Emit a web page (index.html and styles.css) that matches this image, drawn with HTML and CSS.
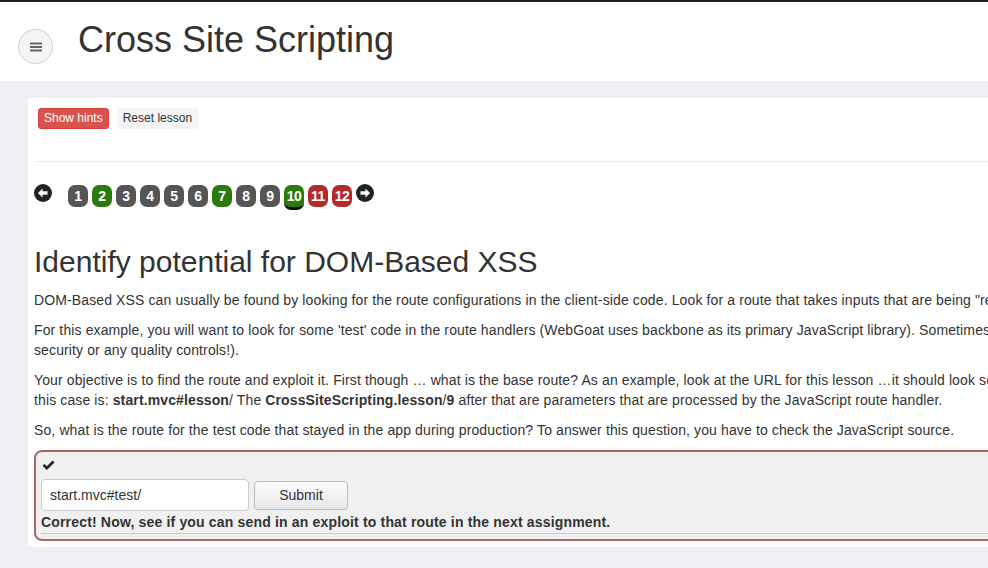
FILE: index.html
```html
<!DOCTYPE html>
<html lang="en">
<head>
<meta charset="utf-8">
<title>Cross Site Scripting</title>
<link rel="stylesheet" href="styles.css">
</head>
<body>
<header class="header">
  <button class="menu-btn" aria-label="menu">
    <svg width="12" height="10" viewBox="0 0 12 10"><rect x="0" y="0.5" width="12" height="2" fill="#666"/><rect x="0" y="4" width="12" height="2" fill="#666"/><rect x="0" y="7.5" width="12" height="2" fill="#666"/></svg>
  </button>
  <h1 class="title">Cross Site Scripting</h1>
</header>
<main class="panel">
  <div class="controls">
    <button class="btn btn-danger">Show hints</button>
    <button class="btn btn-default">Reset lesson</button>
  </div>
  <nav class="pager">
    <span class="arrow"><svg width="18" height="18" viewBox="0 0 18 18"><circle cx="9" cy="9" r="9" fill="#222"/><path d="M4 9 L8.5 4.5 L8.5 7.2 L13.5 7.2 L13.5 10.8 L8.5 10.8 L8.5 13.5 Z" fill="#fff"/></svg></span>
    <div class="pages">
      <span class="page gray">1</span>
      <span class="page green">2</span>
      <span class="page gray">3</span>
      <span class="page gray">4</span>
      <span class="page gray">5</span>
      <span class="page gray">6</span>
      <span class="page green">7</span>
      <span class="page gray">8</span>
      <span class="page gray">9</span>
      <span class="page green current">10</span>
      <span class="page red">11</span>
      <span class="page red">12</span>
    </div>
    <span class="arrow"><svg width="18" height="18" viewBox="0 0 18 18"><circle cx="9" cy="9" r="9" fill="#222"/><path d="M14 9 L9.5 4.5 L9.5 7.2 L4.5 7.2 L4.5 10.8 L9.5 10.8 L9.5 13.5 Z" fill="#fff"/></svg></span>
  </nav>
  <section class="content">
    <h2 class="lesson-title">Identify potential for DOM-Based XSS</h2>
    <p>DOM-Based XSS can usually be found by looking for the route configurations in the client-side code. Look for a route that takes inputs that are being "reflected" to the page.</p>
    <p>For this example, you will want to look for some 'test' code in the route handlers (WebGoat uses backbone as its primary JavaScript library). Sometimes, test code gets left in production (and often times test code is very simple and lacks<br>security or any quality controls!).</p>
    <p>Your objective is to find the route and exploit it. First though … what is the base route? As an example, look at the URL for this lesson …it should look something like /WebGoat/start.mvc#lesson/CrossSiteScripting.lesson/9. The 'base route' in<br>this case is: <b>start.mvc#lesson</b>/ The <b>CrossSiteScripting.lesson</b>/<b>9</b> after that are parameters that are processed by the JavaScript route handler.</p>
    <p>So, what is the route for the test code that stayed in the app during production? To answer this question, you have to check the JavaScript source.</p>
    <div class="assignment">
      <div class="check"><svg width="13" height="11" viewBox="0 0 13 11"><path d="M0.5 5.8 L2.4 3.9 L4.8 6.3 L10.6 0.5 L12.5 2.4 L4.8 10.1 Z" fill="#222"/></svg></div>
      <form class="answer-form">
        <input class="field" type="text" value="start.mvc#test/">
        <button type="button" class="submit">Submit</button>
      </form>
      <div class="feedback">Correct! Now, see if you can send in an exploit to that route in the next assignment.</div>
    </div>
  </section>
</main>
</body>
</html>
```
FILE: styles.css
```css
html, body {
  margin: 0;
  padding: 0;
}
body {
  background: #eff0f4;
  font-family: "Liberation Sans", Arial, sans-serif;
  color: #333;
  overflow: hidden;
  width: 988px;
  height: 568px;
  border-top: 2px solid #1e1e1e;
  box-sizing: border-box;
}
.header {
  background: #fff;
  height: 80px;
  border-bottom: 1px solid #e4e5e8;
  display: flex;
  align-items: flex-start;
}
.menu-btn {
  margin: 27px 0 0 18px;
  width: 35px;
  height: 35px;
  border-radius: 50%;
  border: 1px solid #cfcfcf;
  background: #f5f5f5;
  padding: 0;
  display: flex;
  align-items: center;
  justify-content: center;
}
.title {
  margin: 20px 0 0 25px;
  font-size: 36px;
  line-height: 36px;
  font-weight: normal;
  color: #333;
  white-space: nowrap;
}
.panel {
  margin: 15px 0 0 28px;
  width: 1400px;
  background: #fff;
  border-radius: 4px 0 0 4px;
  padding: 0 0 6px 6px;
}
.controls {
  height: 53px;
  padding: 10px 0 0 3px;
  border-bottom: 1px solid #ececec;
  margin-left: 1px;
  display: flex;
  gap: 8px;
  align-items: flex-start;
}
.btn {
  font-family: "Liberation Sans", Arial, sans-serif;
  font-size: 12px;
  line-height: 19px;
  padding: 0 5px;
  border-radius: 3px;
  border: 1px solid transparent;
}
.btn-danger {
  background: #d9534f;
  border-color: #d43f3a;
  color: #fff;
}
.btn-default {
  background: #f4f4f4;
  border-color: #f4f4f4;
  color: #333;
}
.pager {
  display: flex;
  align-items: flex-start;
  margin-top: 22px;
  height: 24px;
}
.arrow {
  display: block;
  height: 18px;
}
.pages {
  display: flex;
  gap: 4px;
  margin: 1px 4px 0 16px;
}
.page {
  width: 20px;
  height: 22px;
  border-radius: 7px;
  color: #fff;
  font-weight: bold;
  font-size: 14px;
  line-height: 22px;
  text-align: center;
  letter-spacing: -0.5px;
  box-sizing: border-box;
}
.gray { background: #555; }
.green { background: #2a7a0e; }
.red { background: #b52a2a; }
.current {
  border-bottom: 3px solid #111;
  height: 25px;
}
.content {
  margin-top: 37px;
}
.lesson-title {
  font-size: 30px;
  line-height: 33px;
  font-weight: normal;
  margin: 0 0 12px;
  color: #333;
  white-space: nowrap;
}
p {
  font-size: 14px;
  line-height: 20px;
  letter-spacing: 0.12px;
  margin: 0 0 10px;
  white-space: nowrap;
}
.assignment {
  margin-top: 2px;
  border: 2px solid #a46868;
  border-radius: 8px;
  background: #f0f0f0;
  padding: 3px 5px 5px 5px;
}
.check {
  height: 20px;
  display: flex;
  align-items: center;
  padding-left: 1px;
}
.answer-form {
  display: flex;
  align-items: center;
  gap: 5px;
  margin: 4px 0 0;
}
.field {
  width: 208px;
  height: 32px;
  box-sizing: border-box;
  border: 1px solid #ccc;
  border-radius: 4px;
  padding: 0 8px;
  font-family: "Liberation Sans", Arial, sans-serif;
  font-size: 14px;
  color: #333;
  background: #fff;
}
.submit {
  width: 94px;
  height: 29px;
  border: 1px solid #bbb;
  border-radius: 4px;
  background: linear-gradient(#fbfbfb, #e8e8e8);
  font-family: "Liberation Sans", Arial, sans-serif;
  font-size: 14px;
  color: #333;
}
.feedback {
  margin-top: 1px;
  font-size: 14px;
  font-weight: bold;
  line-height: 20px;
  letter-spacing: 0.17px;
  padding-bottom: 1px;
  border-bottom: 1px solid #ccc;
  white-space: nowrap;
}
```
